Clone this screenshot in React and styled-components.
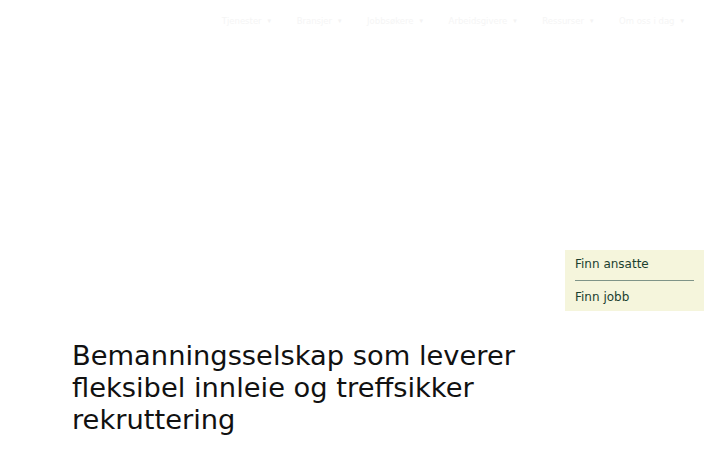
import React from 'react'
import styled, { createGlobalStyle } from 'styled-components'

const GlobalStyle = createGlobalStyle`
  html, body { margin: 0; padding: 0; background: #ffffff; }
  body { font-family: "DejaVu Sans", Verdana, sans-serif; }
`

const navItems = [
  'Tjenester',
  'Bransjer',
  'Jobbsøkere',
  'Arbeidsgivere',
  'Ressurser',
  'Om oss i dag',
]

const Page = styled.div`
  width: 720px;
  min-height: 450px;
  display: flex;
  flex-direction: column;
`

const Header = styled.header`
  height: 42px;
  display: flex;
  justify-content: flex-end;
  align-items: center;
  padding-right: 36px;
`

const Nav = styled.nav`
  display: flex;
  gap: 25.5px;
`

const NavItem = styled.a`
  display: flex;
  align-items: center;
  gap: 6px;
  font-size: 8.5px;
  color: #f5f5f5;
  text-decoration: none;
  white-space: nowrap;
`

const Caret = styled.span`
  font-size: 7px;
  color: #f3f3f3;
`

const Hero = styled.section`
  display: flex;
  flex-direction: column;
  padding-top: 208px;
`

const QuickLinks = styled.div`
  align-self: flex-end;
  margin-right: 16px;
  width: 139px;
  box-sizing: border-box;
  background: #f5f5dc;
  padding: 0 10px;
  display: flex;
  flex-direction: column;
`

const QuickLink = styled.a`
  display: block;
  font-size: 12px;
  line-height: 16px;
  padding: ${p => (p.$divider ? '6px 0 8px' : '8px 0 6px')};
  color: #1b3f2f;
  text-decoration: none;
  border-bottom: ${p => (p.$divider ? '1px solid #7f9488' : 'none')};
`

const Heading = styled.h1`
  margin: 29px 0 0 72px;
  width: 480px;
  font-size: 27.3px;
  font-weight: 400;
  line-height: 32px;
  color: #111111;
`

export default function App() {
  return (
    <Page>
      <GlobalStyle />
      <Header>
        <Nav>
          {navItems.map(item => (
            <NavItem key={item} href="#">
              {item}
              <Caret>▾</Caret>
            </NavItem>
          ))}
        </Nav>
      </Header>
      <Hero>
        <QuickLinks>
          <QuickLink href="#" $divider>Finn ansatte</QuickLink>
          <QuickLink href="#">Finn jobb</QuickLink>
        </QuickLinks>
        <Heading>
          Bemanningsselskap som leverer fleksibel innleie og treffsikker rekruttering
        </Heading>
      </Hero>
    </Page>
  )
}
